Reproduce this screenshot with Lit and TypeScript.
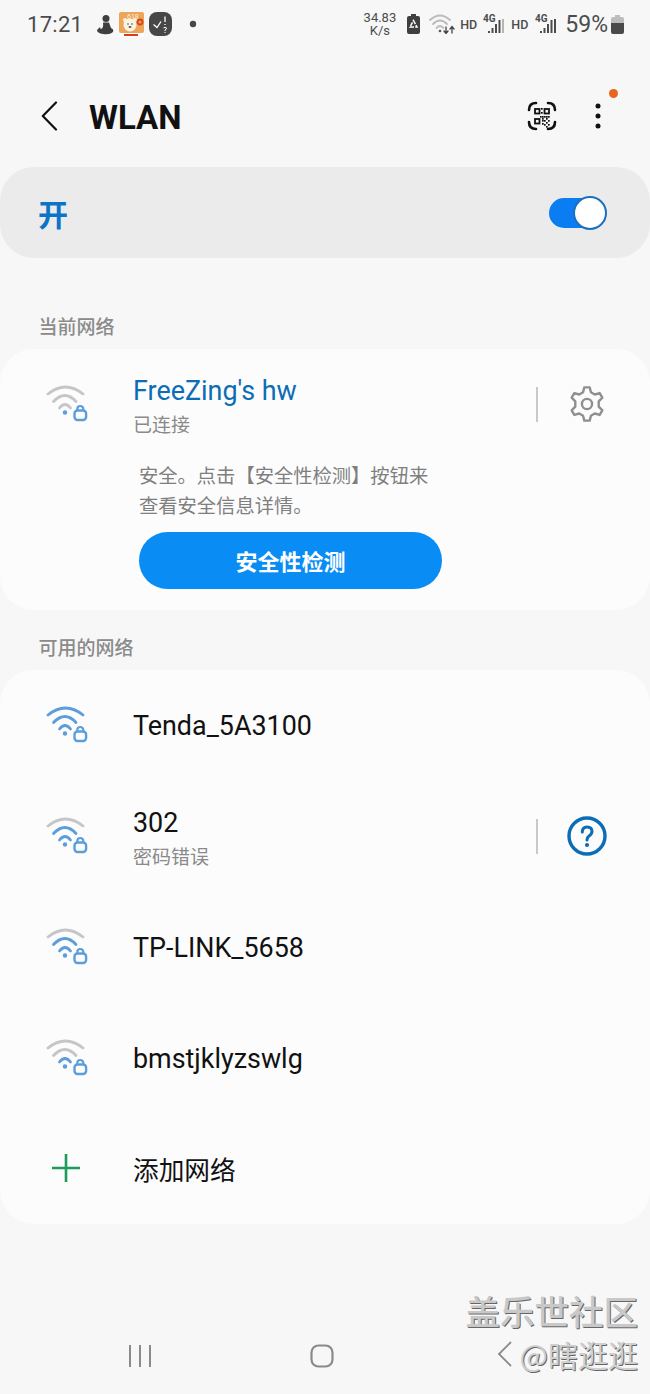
import { LitElement, css, html, svg } from "lit";
import { customElement } from "lit/decorators.js";

const BLUE = "#5c9ddb";
const GRAY = "#c6c6c6";

// strength = how many of the three arcs are lit
function wifiIcon(strength: number) {
  const arc = (n: number) => (strength >= n ? BLUE : GRAY);
  return html`<svg class="wifi" width="48" height="44" viewBox="0 0 48 44" fill="none" stroke-linecap="round">
    <path d="M4 12 Q21.500 -2 39 12" stroke=${arc(3)} stroke-width="2.800" />
    <path d="M9.500 19.500 Q21 7.500 32 19.500" stroke=${arc(2)} stroke-width="2.800" />
    <path d="M15.500 26 Q21 19 26.500 26" stroke=${arc(1)} stroke-width="2.800" />
    <circle cx="21" cy="30.500" r="2.200" fill=${BLUE} />
    <rect x="30.500" y="28.500" width="11.600" height="9.500" rx="3" stroke=${BLUE} stroke-width="2.400" />
    <path d="M33.300 28 V27 a3 3 0 0 1 6 0 V28" stroke=${BLUE} stroke-width="2.200" />
  </svg>`;
}

const qrCells: [number, number][] = [
  [14, 7], [14, 11], [13, 15], [15, 15], [17, 15], [19, 15], [21, 15], [15, 17], [19, 17], [17, 19], [15, 19], [21, 19], [19, 21], [15, 22], [21, 23], [17, 23], [19, 25],
];

@customElement("app-root")
export class AppRoot extends LitElement {
  static styles = css`
    :host {
      display: block;
      position: relative;
      width: 650px;
      height: 1394px;
      overflow: hidden;
      background: #f7f7f7;
      font-family: Roboto, "Noto Sans CJK SC", sans-serif;
      color: #111;
    }
    .status {
      height: 48px;
      display: flex;
      align-items: center;
      padding: 0 26px 0 27px;
      color: #4c4c4c;
    }
    .time {
      font-size: 22px;
      letter-spacing: 0.3px;
      margin-right: 13px;
    }
    .status-left {
      display: flex;
      align-items: center;
      gap: 5px;
    }
    .dot {
      margin-left: 12px;
    }
    .spacer {
      flex: 1;
    }
    .speed {
      font-size: 13px;
      line-height: 13px;
      text-align: center;
    }
    .status-right {
      display: flex;
      align-items: center;
    }
    .doc {
      margin: 0 9px 0 11px;
    }
    .hd {
      font-size: 12.5px;
      font-weight: 500;
    }
    .hd.first {
      margin: 0 6px 0 5px;
    }
    .hd.second {
      margin: 0 7px 0 6px;
    }
    .pct {
      font-size: 23px;
      margin: 0 3px 0 8px;
    }
    .appbar {
      height: 119px;
      display: flex;
      align-items: center;
      padding: 17px 49px 0 40px;
      box-sizing: border-box;
      position: relative;
    }
    .title {
      font-size: 33px;
      font-weight: 700;
      margin: 2px 0 0 31px;
      flex: 1;
    }
    .menu {
      margin-left: 38px;
    }
    .notify {
      position: absolute;
      left: 609px;
      top: 41px;
      width: 9px;
      height: 9px;
      border-radius: 50%;
      background: #e8651f;
    }
    .master {
      height: 91px;
      border-radius: 34px;
      background: #ebebeb;
      display: flex;
      align-items: center;
      justify-content: space-between;
      padding: 0 44px 0 38px;
    }
    .master .on {
      font-size: 30px;
      font-weight: 700;
      color: #0b74c8;
    }
    .toggle {
      width: 57px;
      height: 30px;
      border-radius: 15px;
      background: #0a7df2;
      position: relative;
    }
    .thumb {
      position: absolute;
      right: -1px;
      top: -2px;
      width: 30px;
      height: 30px;
      border-radius: 50%;
      background: #fff;
      border: 2px solid #1a6fc0;
    }
    .section {
      font-size: 19px;
      font-weight: 500;
      color: #8b8b8b;
      padding: 57px 0 8px 38.5px;
      line-height: 26px;
    }
    .section.second {
      padding-top: 26px;
    }
    .card {
      background: #fcfcfc;
      border-radius: 34px;
    }
    .current {
      height: 261px;
      box-sizing: border-box;
    }
    .row {
      height: 110.8px;
      display: flex;
      align-items: center;
      padding-left: 44px;
      position: relative;
    }
    .wifi {
      flex: none;
      margin-right: 41px;
    }
    .names {
      flex: 1;
      padding-top: 2px;
    }
    .names.two {
      padding-top: 10px;
    }
    .names.add {
      padding-top: 4px;
    }
    .name {
      font-size: 26.9px;
      line-height: 34px;
    }
    .name.active {
      color: #0b6db5;
    }
    .name.cjk {
      font-size: 25.7px;
    }
    .sub {
      font-size: 19px;
      line-height: 36px;
      color: #8a8a8a;
    }
    .divider {
      width: 2px;
      height: 35px;
      background: #c9c9c9;
      margin-right: 29px;
    }
    .end {
      width: 40px;
      margin-right: 43px;
      display: flex;
      justify-content: center;
    }
    .detail {
      padding: 0 0 0 139px;
      margin-top: 2px;
      font-size: 19.3px;
      line-height: 30px;
      color: #7f7f7f;
    }
    .check {
      width: 303px;
      height: 57px;
      border-radius: 29px;
      background: #0a8cf5;
      color: #fff;
      font-size: 22px;
      font-weight: 700;
      display: flex;
      align-items: center;
      justify-content: center;
      margin: 10px 0 0 139px;
    }
    .plus {
      width: 44px;
      margin-right: 45px;
      display: flex;
      padding-left: 7px;
      box-sizing: border-box;
      margin-top: -1px;
    }
    .nav {
      position: absolute;
      left: 0;
      right: 0;
      bottom: 0;
      height: 76px;
      display: flex;
      align-items: center;
      padding-left: 128px;
      gap: 158px;
    }
    .mark {
      position: absolute;
      right: 12px;
      top: 1288px;
      text-align: right;
      color: #c8c8c8;
      text-shadow: 1px 1px 0 #666;
      font-family: "Noto Sans CJK SC", sans-serif;
    }
    .mark .big {
      font-size: 34.5px;
      font-weight: 500;
      line-height: 44px;
    }
    .mark .small {
      display: flex;
      align-items: center;
      justify-content: flex-end;
      gap: 7px;
      font-size: 30px;
      line-height: 44px;
      color: #cfcfcf;
    }
  `;

  private statusBar() {
    const bars = (last: string) => html`<svg width="22" height="20" viewBox="0 0 22 20">
      <text x="0" y="8" font-size="10" font-weight="700" fill="#4c4c4c" font-family="Roboto, sans-serif">4G</text>
      <rect x="5" y="17" width="2" height="2" fill="#4c4c4c" />
      <rect x="8.500" y="14" width="2" height="5" fill="#4c4c4c" />
      <rect x="12" y="10" width="2" height="9" fill="#4c4c4c" />
      <rect x="15.500" y="6" width="2" height="13" fill="#4c4c4c" />
      <rect x="19" y="5" width="2" height="14" fill=${last} />
    </svg>`;
    return html`<div class="status">
      <span class="time">17:21</span>
      <div class="status-left">
        <svg width="18" height="21" viewBox="0 0 18 21">
          <circle cx="10" cy="4.500" r="3.500" fill="#3f3f3f" />
          <path d="M7 8.500 H13 L15 14 Q18 15 17 18 Q14 21 7 20 Q1 19 1 16 L4 13 L4.500 15 Q8 15 7 8.500Z" fill="#3f3f3f" />
        </svg>
        <svg width="25" height="25" viewBox="0 0 25 25">
          <rect width="25" height="21" rx="2" fill="#eba65a" />
          <text x="8" y="7" font-size="7" fill="#fbeed8" font-family="Roboto, sans-serif">618</text>
          <circle cx="11" cy="13" r="6.500" fill="#fbf2e2" />
          <circle cx="6" cy="8" r="2" fill="#fbf2e2" />
          <circle cx="16" cy="8" r="2" fill="#fbf2e2" />
          <circle cx="9" cy="12" r="0.800" fill="#444" />
          <circle cx="13" cy="12" r="0.800" fill="#444" />
          <ellipse cx="11" cy="15" rx="1.500" ry="1" fill="#555" />
          <circle cx="21" cy="10" r="2.500" fill="none" stroke="#d6451d" stroke-width="1.800" />
          <rect y="21" width="25" height="4" fill="#fff" />
          <rect x="5" y="22" width="14" height="2" fill="#d8401c" />
        </svg>
        <svg width="23" height="24" viewBox="0 0 23 24">
          <rect width="23" height="24" rx="8" fill="#474747" />
          <path d="M4.500 12.500 L8 15.500 L12 9.500" stroke="#fff" stroke-width="1.300" fill="none" />
          <path d="M16 4.500 V10 M16 12 V13" stroke="#fff" stroke-width="1.300" />
          <path d="M14.500 16 Q16 14.500 17.500 16 Q17.500 17.500 16 18 V19 M16 20 V21" stroke="#fff" stroke-width="1" fill="none" />
        </svg>
        <svg class="dot" width="8" height="8"><circle cx="4" cy="4" r="3.200" fill="#474747" /></svg>
      </div>
      <div class="spacer"></div>
      <div class="speed">34.83<br />K/s</div>
      <div class="status-right">
        <svg class="doc" width="13" height="20" viewBox="0 0 13 20">
          <path d="M4 0 H9 V2 H11 Q13 2 13 4 V18 Q13 20 11 20 H2 Q0 20 0 18 V4 Q0 2 2 2 H4Z" fill="#3f3f3f" />
          <path d="M6.500 6.500 L10 13 H3Z" fill="none" stroke="#fff" stroke-width="1.500" stroke-dasharray="4 1.200" />
        </svg>
        <svg width="26" height="20" viewBox="0 0 26 20" fill="none" stroke-linecap="round">
          <path d="M1 6 Q11 -3 21 6" stroke="#bbb" stroke-width="1.800" />
          <path d="M4 10 Q11 3 18 10" stroke="#bbb" stroke-width="1.800" />
          <path d="M7.500 14 Q11 10 14.500 14" stroke="#bbb" stroke-width="1.800" />
          <circle cx="11" cy="17" r="1.300" fill="#555" />
          <path d="M17 13 V19 M15 17 L17 19.500 L19 17 M23 19 V13 M21 15 L23 12.500 L25 15" stroke="#444" stroke-width="1.300" />
        </svg>
        <span class="hd first">HD</span>
        ${bars("#b5b5b5")}
        <span class="hd second">HD</span>
        ${bars("#4c4c4c")}
        <span class="pct">59%</span>
        <svg width="13" height="19" viewBox="0 0 13 19">
          <path d="M4 0 H9 V2 H11 Q13 2 13 4 V8 H0 V4 Q0 2 2 2 H4Z" fill="#bdbdbd" />
          <path d="M0 8 H13 V17 Q13 19 11 19 H2 Q0 19 0 17Z" fill="#4a4a4a" />
        </svg>
      </div>
    </div>`;
  }

  private appBar() {
    return html`<div class="appbar">
      <svg width="18" height="30" viewBox="0 0 18 30" fill="none" stroke="#111" stroke-width="2.200" stroke-linecap="round" stroke-linejoin="round">
        <path d="M16 1.500 L2.800 15 L16 28.500" />
      </svg>
      <span class="title">WLAN</span>
      <svg width="30" height="30" viewBox="0 0 30 30" fill="none" stroke="#111">
        <path d="M2 9 Q2 2 9 2 M21 2 Q28 2 28 9 M2 21 Q2 28 9 28 M21 28 Q28 28 28 21" stroke-width="2.600" stroke-linecap="round" />
        <rect x="8" y="8" width="4.500" height="4.500" stroke-width="1.800" />
        <rect x="17.500" y="8" width="4.500" height="4.500" stroke-width="1.800" />
        <rect x="8" y="18" width="4.500" height="4.500" stroke-width="1.800" />
        ${qrCells.map(([x, y]) => svg`<rect x=${x} y=${y} width="1.700" height="1.700" fill="#111" stroke="none" />`)}
      </svg>
      <svg class="menu" width="6" height="26" viewBox="0 0 6 26" fill="#111">
        <circle cx="3" cy="3" r="2.500" /><circle cx="3" cy="13" r="2.500" /><circle cx="3" cy="23" r="2.500" />
      </svg>
      <span class="notify"></span>
    </div>`;
  }

  render() {
    return html`
      ${this.statusBar()}
      ${this.appBar()}
      <div class="master">
        <span class="on">开</span>
        <div class="toggle"><span class="thumb"></span></div>
      </div>

      <div class="section">当前网络</div>
      <div class="card current">
        <div class="row">
          ${wifiIcon(0)}
          <div class="names two">
            <div class="name active">FreeZing's hw</div>
            <div class="sub">已连接</div>
          </div>
          <span class="divider"></span>
          <span class="end">
            <svg width="38" height="38" viewBox="0 0 24 24" fill="none" stroke="#8f8f8f" stroke-width="1.500" stroke-linejoin="round">
              <circle cx="12" cy="12" r="3.200" />
              <path d="M10.300 1.500 H13.700 L14.500 4.600 L16.900 6 L20 5.100 L21.700 8 L19.400 10.300 V13.700 L21.700 16 L20 18.900 L16.900 18 L14.500 19.400 L13.700 22.500 H10.300 L9.500 19.400 L7.100 18 L4 18.900 L2.300 16 L4.600 13.700 V10.300 L2.300 8 L4 5.100 L7.100 6 L9.500 4.600Z" />
            </svg>
          </span>
        </div>
        <div class="detail">安全。点击【安全性检测】按钮来<br />查看安全信息详情。</div>
        <div class="check">安全性检测</div>
      </div>

      <div class="section second">可用的网络</div>
      <div class="card">
        <div class="row">${wifiIcon(3)}<div class="names"><div class="name">Tenda_5A3100</div></div></div>
        <div class="row">
          ${wifiIcon(2)}
          <div class="names two">
            <div class="name">302</div>
            <div class="sub">密码错误</div>
          </div>
          <span class="divider"></span>
          <span class="end">
            <svg width="40" height="40" viewBox="0 0 40 40" fill="none" stroke="#0b6db5">
              <circle cx="20" cy="20" r="18" stroke-width="3.400" />
              <path d="M15.300 16 Q15.300 11 20 11 Q25 11 25 15.500 Q25 18 22 20 Q20 21.500 20 24" stroke-width="3" stroke-linecap="round" />
              <circle cx="20" cy="29" r="2.100" fill="#0b6db5" stroke="none" />
            </svg>
          </span>
        </div>
        <div class="row">${wifiIcon(2)}<div class="names"><div class="name">TP-LINK_5658</div></div></div>
        <div class="row">${wifiIcon(1)}<div class="names"><div class="name">bmstjklyzswlg</div></div></div>
        <div class="row">
          <span class="plus">
            <svg width="30" height="30" viewBox="0 0 30 30" stroke="#1b9c58" stroke-width="2.600"><path d="M15 1 V29 M1 15 H29" /></svg>
          </span>
          <div class="names add"><div class="name cjk">添加网络</div></div>
        </div>
      </div>

      <div class="nav">
        <svg width="24" height="24" viewBox="0 0 24 24" stroke="#8a8a8a" stroke-width="2"><path d="M2 1 V23 M12 1 V23 M22 1 V23" /></svg>
        <svg width="24" height="24" viewBox="0 0 24 24" fill="none" stroke="#8a8a8a" stroke-width="2.200"><rect x="1.500" y="1.500" width="21" height="21" rx="7" /></svg>
      </div>
      <div class="mark">
        <div class="big">盖乐世社区</div>
        <div class="small">
          <svg width="16" height="28" viewBox="0 0 16 28" fill="none" stroke="#8a8a8a" stroke-width="1.800"><path d="M14 2 L2 14 L14 26" /></svg>
          <span>@瞎逛逛</span>
        </div>
      </div>
    `;
  }
}
